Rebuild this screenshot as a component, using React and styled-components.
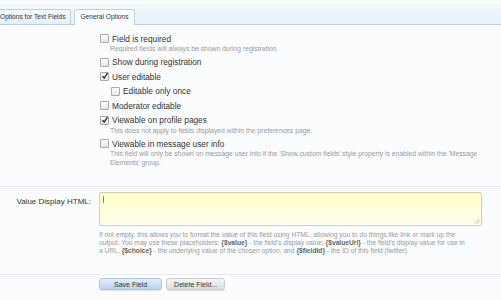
import styled, { createGlobalStyle } from "styled-components";

const Global = createGlobalStyle`
  body {
    margin: 0;
    background: #fbfcfe;
    font-family: "Liberation Sans", Arial, sans-serif;
    color: #333;
  }
`;

const Page = styled.div`
  width: 501px;
  height: 300px;
  overflow: hidden;
`;

const TabBar = styled.div`
  display: flex;
  align-items: flex-end;
  height: 24px;
  margin-left: -6px;
  border-bottom: 1px solid #b8cedb;
  background: linear-gradient(#fafbfc 0, #fafbfc 3px, #f2f9fc 4px, #e5f2f8 100%);
`;

const Tab = styled.div`
  line-height: 14px;
  padding: 0 5px;
  margin-right: 3px;
  font-size: 6.6px;
  color: #333;
  border: 1px solid #bdd2de;
  border-bottom: none;
  border-radius: 3px 3px 0 0;
  background: ${(p) => (p.active ? "#fcfdfe" : "linear-gradient(#f3f9fc, #e4f0f6)")};
  margin-bottom: ${(p) => (p.active ? "-1px" : "0")};
  height: ${(p) => (p.active ? "15px" : "14px")};
`;

const Form = styled.div`
  padding-top: 8px;
`;

const Row = styled.div`
  display: grid;
  grid-template-columns: 91px 1fr;
  column-gap: 8px;
  padding-bottom: ${(p) => p.pb || 0}px;
  border-bottom: ${(p) => (p.line ? "1px solid #e6ecf1" : "none")};
  margin-bottom: ${(p) => p.mb || 0}px;
`;

const Label = styled.div`
  text-align: right;
  font-size: 8px;
  color: #333;
  padding-top: 5px;
`;

const Options = styled.div`
  display: flex;
  flex-direction: column;
  gap: 3.5px;
`;

const Option = styled.div`
  padding-left: ${(p) => (p.indent ? 12 : 1)}px;
`;

const CheckLine = styled.div`
  display: flex;
  align-items: center;
  gap: 3px;
  height: 11px;
  font-size: 8.3px;
  color: #333;
`;

const Box = styled.span`
  position: relative;
  width: 7px;
  height: 7px;
  border: 1px solid #a9a9a9;
  border-radius: 1px;
  background: linear-gradient(#ffffff, #e6e6e6);
  flex: none;
  svg {
    position: absolute;
    left: 0;
    top: -1px;
  }
`;

const Hint = styled.div`
  font-size: 6.8px;
  line-height: 9px;
  color: #9a9a9a;
  white-space: nowrap;
  padding-left: ${(p) => p.pl || 0}px;
  b {
    color: #666;
  }
`;

const Area = styled.div`
  position: relative;
  width: 381px;
  height: 32px;
  border: 1px solid #cfcfb8;
  border-radius: 2px;
  background: linear-gradient(#ffffc6, #fffff0);
`;

const Caret = styled.span`
  position: absolute;
  left: 3px;
  top: 3px;
  width: 1px;
  height: 7px;
  background: #888;
`;

const Grip = styled.svg`
  position: absolute;
  right: 1px;
  bottom: 1px;
`;

const AreaHint = styled(Hint)`
  font-size: 6.7px;
  line-height: 7.8px;
  padding-top: 5px;
`;

const Buttons = styled.div`
  display: flex;
  gap: 4px;
  padding-top: 3px;
`;

const Button = styled.button`
  height: 12px;
  padding: 0 ${(p) => p.px}px;
  font-family: inherit;
  font-size: 7px;
  line-height: 11px;
  color: #333;
  border: 1px solid ${(p) => (p.primary ? "#b3cbe0" : "#cfcfcf")};
  border-radius: 3px;
  background: ${(p) =>
    p.primary ? "linear-gradient(#e2eef8, #b8d3ea)" : "linear-gradient(#f6f6f6, #dddddd)"};
  box-shadow: 0 1px 1px rgba(0, 0, 0, 0.12);
`;

function Check({ checked }) {
  return (
    <Box>
      {checked && (
        <svg width="8" height="8" viewBox="0 0 8 8">
          <path d="M1.5 4.2 L3.2 6 L6.5 1.2" fill="none" stroke="#222" strokeWidth="1.3" />
        </svg>
      )}
    </Box>
  );
}

function Item({ checked, indent, children, hint }) {
  return (
    <Option indent={indent}>
      <CheckLine>
        <Check checked={checked} />
        {children}
      </CheckLine>
      {hint && <Hint pl={10}>{hint}</Hint>}
    </Option>
  );
}

function App() {
  return (
    <Page>
      <Global />
      <TabBar>
        <Tab>Options for Text Fields</Tab>
        <Tab active>General Options</Tab>
      </TabBar>
      <Form>
        <Row pb={19} line mb={5}>
          <div />
          <Options>
            <Item hint="Required fields will always be shown during registration.">Field is required</Item>
            <Item>Show during registration</Item>
            <Item checked>User editable</Item>
            <Item indent>Editable only once</Item>
            <Item>Moderator editable</Item>
            <Item checked hint="This does not apply to fields displayed within the preferences page.">
              Viewable on profile pages
            </Item>
            <Item
              hint={
                <>
                  This field will only be shown on message user info if the 'Show custom fields' style property is
                  enabled within the 'Message
                  <br />
                  Elements' group.
                </>
              }
            >
              Viewable in message user info
            </Item>
          </Options>
        </Row>
        <Row pb={20} line>
          <Label>Value Display HTML:</Label>
          <div>
            <Area>
              <Caret />
              <Grip width="6" height="6" viewBox="0 0 6 6">
                <path d="M5.5 1 L1 5.5 M5.5 3.5 L3.5 5.5" stroke="#999" strokeWidth="0.7" />
              </Grip>
            </Area>
            <AreaHint>
              If not empty, this allows you to format the value of this field using HTML, allowing you to do things
              like link or mark up the
              <br />
              output. You may use these placeholders: <b>{"{$value}"}</b> - the field's display value;{" "}
              <b>{"{$valueUrl}"}</b> - the field's display value for use in
              <br />a URL, <b>{"{$choice}"}</b> - the underlying value of the chosen option, and <b>{"{$fieldId}"}</b> -
              the ID of this field (twitter).
            </AreaHint>
          </div>
        </Row>
        <Row>
          <div />
          <Buttons>
            <Button primary px={14}>
              Save Field
            </Button>
            <Button px={7}>Delete Field...</Button>
          </Buttons>
        </Row>
      </Form>
    </Page>
  );
}

export default App;
